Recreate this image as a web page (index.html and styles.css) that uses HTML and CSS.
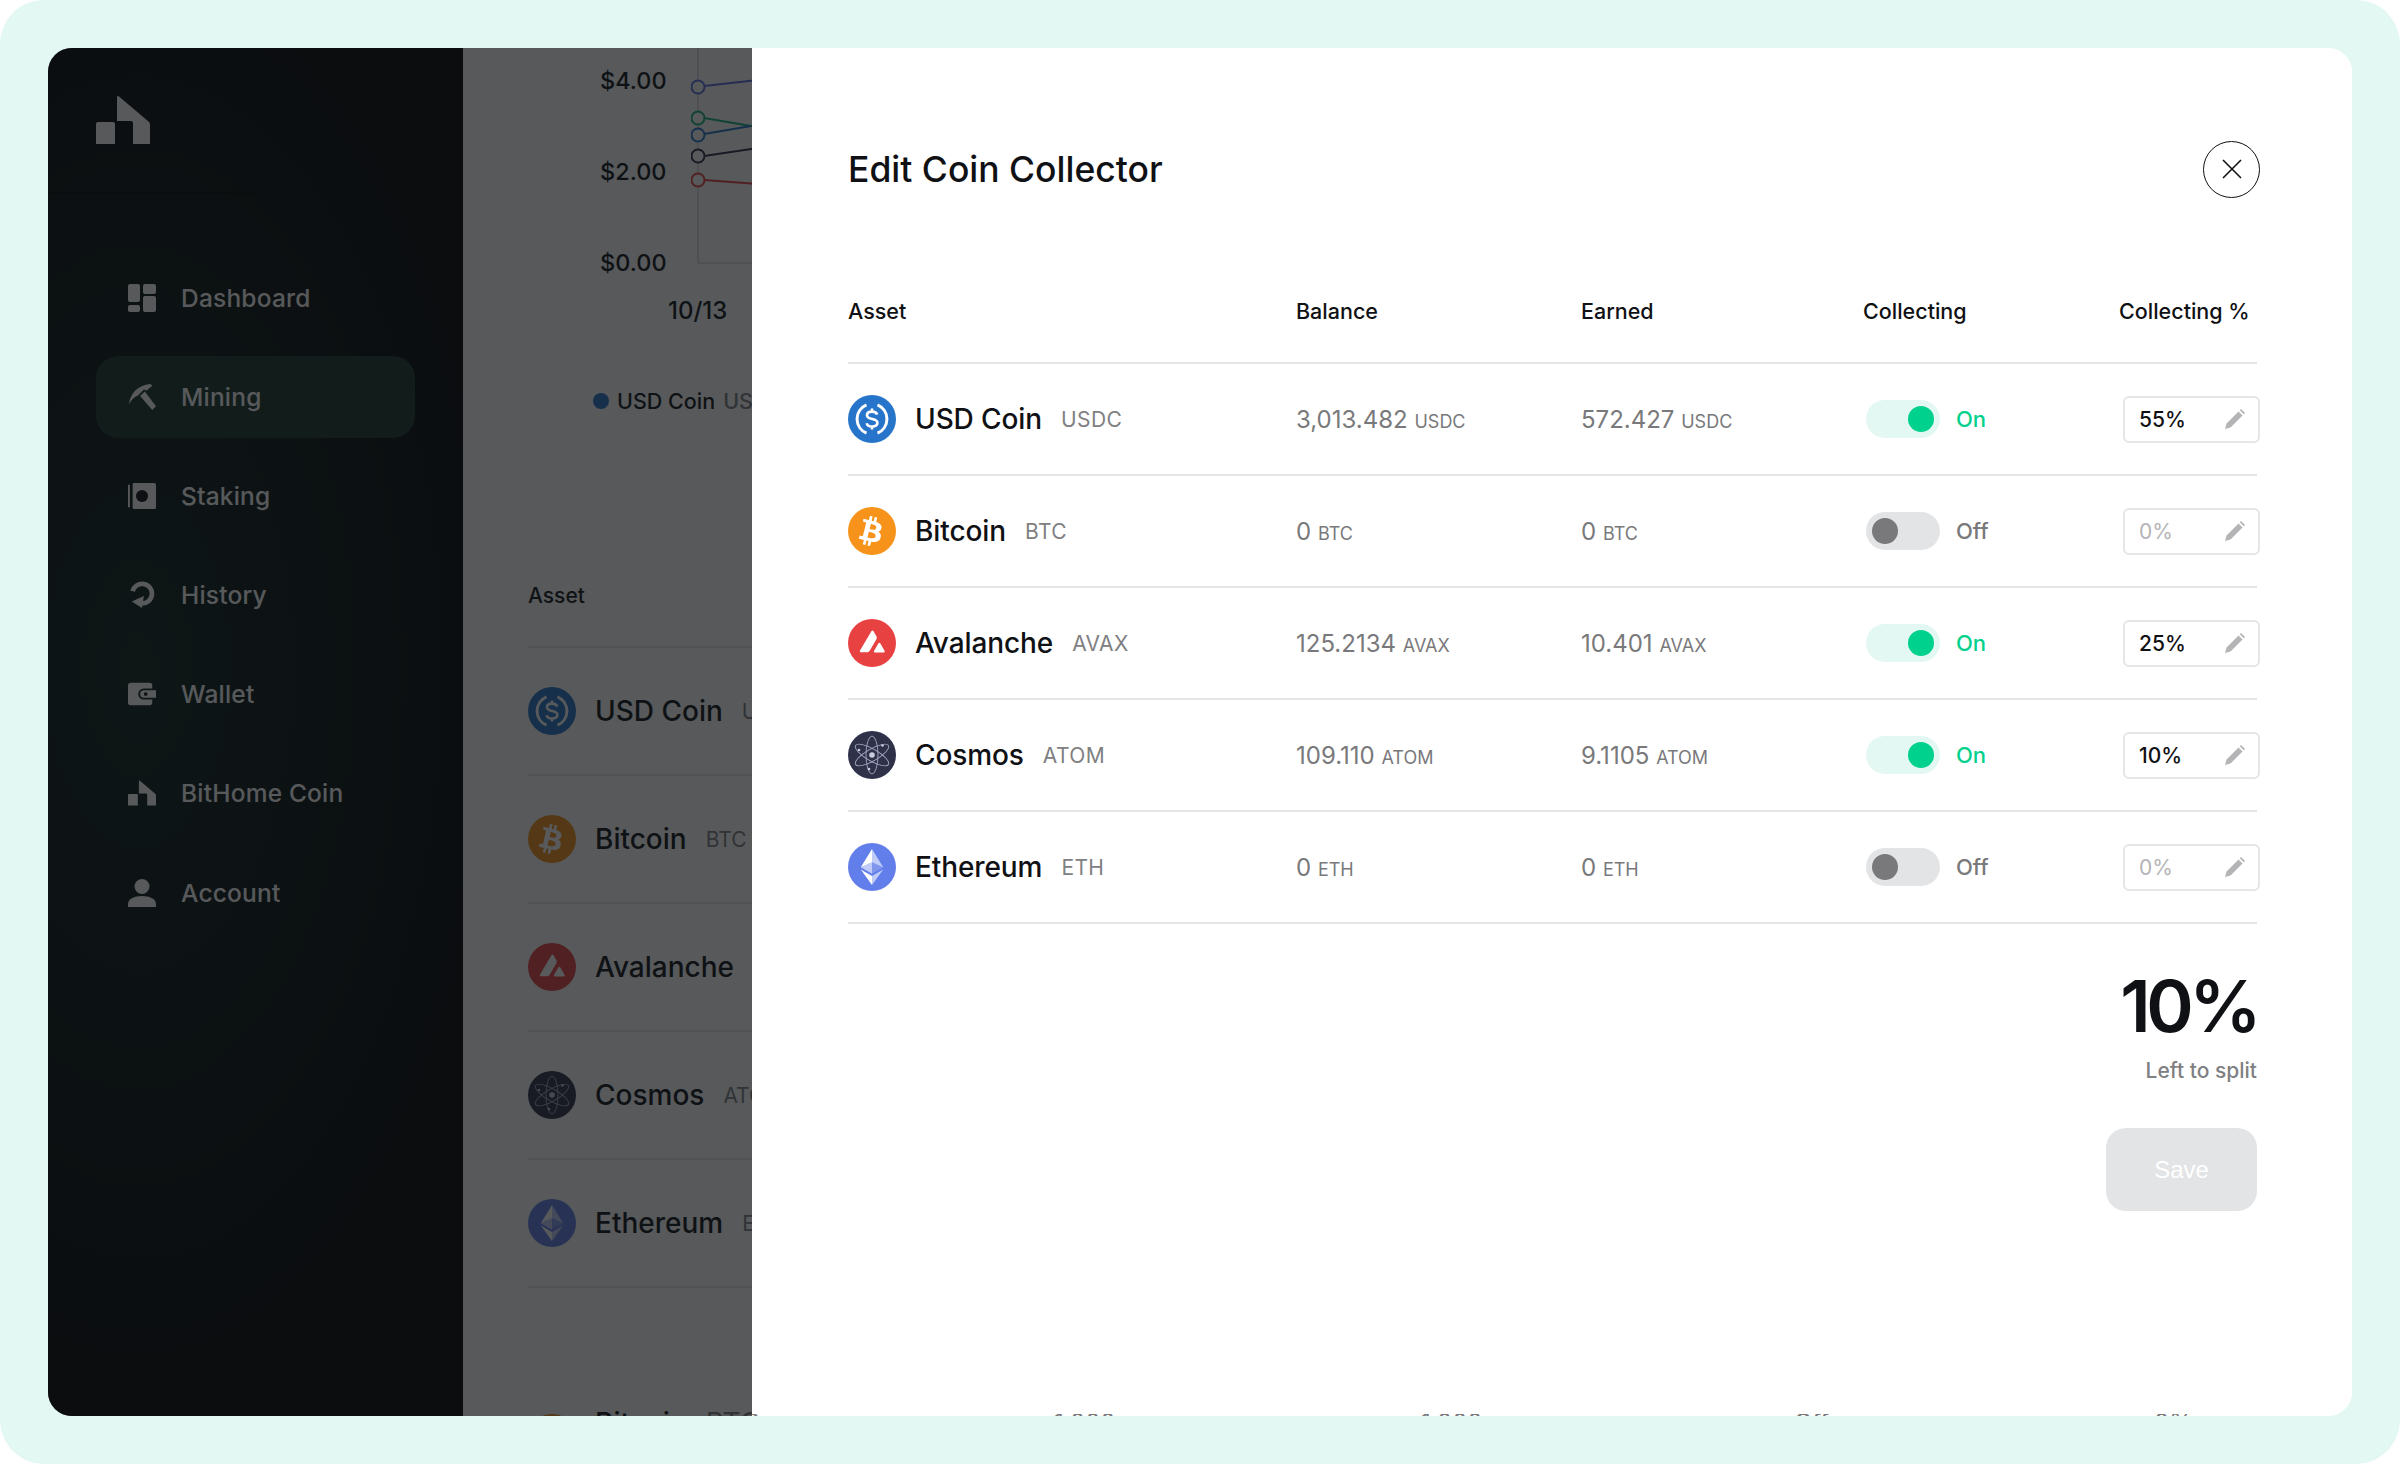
FILE: index.html
```html
<!DOCTYPE html>
<html lang="en">
<head>
  <meta charset="UTF-8">
  <title>Edit Coin Collector</title>
  <link rel="stylesheet" href="styles.css">
</head>
<body>
  <svg class="defs" width="0" height="0">
    <defs>
      <symbol id="coin-usdc" viewBox="0 0 48 48">
        <circle cx="24" cy="24" r="24" fill="#2775ca"/>
        <path d="M18.5 9.8a15.4 15.4 0 0 0 0 28.4M29.5 9.8a15.4 15.4 0 0 1 0 28.4" fill="none" stroke="#fff" stroke-width="3"/>
        <path d="M29.2 19.6c-.6-2-2.6-3-5.2-3-3 0-5 1.400-5 3.700 0 5.100 10.400 2.400 10.400 7.500 0 2.300-2.200 3.700-5.300 3.700-2.800 0-4.900-1.100-5.400-3.300M24 13.500v3.100M24 31.500v3.100" fill="none" stroke="#fff" stroke-width="2.600"/>
      </symbol>
      <symbol id="coin-btc" viewBox="0 0 48 48">
        <circle cx="24" cy="24" r="24" fill="#f7931a"/>
        <path d="M33.500 21c.5-3.200-2-4.900-5.300-6.100l1.100-4.300-2.600-.6-1 4.200-2.100-.5 1-4.200-2.600-.7-1.100 4.300-1.700-.4-3.600-.9-.7 2.800s1.900.4 1.900.5c1.100.3 1.300 1 1.200 1.500l-3 11.900c-.1.300-.5.800-1.200.6 0 0-1.900-.5-1.900-.5l-1.300 3 3.400.8 1.900.5-1.100 4.400 2.600.6 1.100-4.300 2.100.5-1.100 4.300 2.600.7 1.100-4.400c4.500.8 7.800.5 9.300-3.600 1.100-3.200-.1-5.100-2.400-6.300 1.700-.4 3-1.500 3.300-3.800zm-6 8.400c-.8 3.200-6.200 1.500-8 1l1.400-5.700c1.800.5 7.400 1.300 6.600 4.700zm.8-8.500c-.7 2.900-5.200 1.400-6.700 1.100l1.300-5.100c1.500.4 6.200 1 5.400 4z" fill="#fff"/>
      </symbol>
      <symbol id="coin-avax" viewBox="0 0 48 48">
        <circle cx="24" cy="24" r="24" fill="#e84142"/>
        <path d="M23.400 12.300c.6-1 1.500-1 2.100 0l2.900 5c.5 1 .5 1.900 0 2.900l-6.700 11.600c-.5.800-1.300 1.300-2.300 1.400h-6.300c-1.100 0-1.600-.8-1.100-1.800z" fill="#fff"/>
        <path d="M30.300 24.600c.5-1 1.500-1 2.100 0l4.100 7.200c.5 1 0 1.800-1.100 1.800h-8.200c-1.100 0-1.600-.8-1.100-1.800z" fill="#fff"/>
      </symbol>
      <symbol id="coin-atom" viewBox="0 0 48 48">
        <circle cx="24" cy="24" r="24" fill="#2e3148"/>
        <g fill="none" stroke="#a5a8c4" stroke-width=".9">
          <ellipse cx="24" cy="24" rx="6" ry="19"/>
          <ellipse cx="24" cy="24" rx="6" ry="19" transform="rotate(60 24 24)"/>
          <ellipse cx="24" cy="24" rx="6" ry="19" transform="rotate(120 24 24)"/>
        </g>
        <circle cx="24" cy="24" r="2.800" fill="#c9cbe0"/>
        <circle cx="11" cy="19" r="1.300" fill="#c9cbe0"/>
        <circle cx="34.500" cy="14.500" r="1.300" fill="#c9cbe0"/>
        <circle cx="21" cy="38" r="1.300" fill="#c9cbe0"/>
      </symbol>
      <symbol id="coin-eth" viewBox="0 0 48 48">
        <circle cx="24" cy="24" r="24" fill="#627eea"/>
        <path d="M24 6v13.300l11.200 5z" fill="#fff" fill-opacity=".6"/>
        <path d="M24 6L12.800 24.300l11.200-5z" fill="#fff"/>
        <path d="M24 32.900V42l11.200-15.500z" fill="#fff" fill-opacity=".6"/>
        <path d="M24 32.900V42L12.800 26.500z" fill="#fff"/>
        <path d="M24 30.800l11.200-6.500-11.200-5z" fill="#fff" fill-opacity=".2"/>
        <path d="M12.800 24.300l11.200 6.500V19.300z" fill="#fff" fill-opacity=".6"/>
      </symbol>
      <symbol id="pencil" viewBox="0 0 20 20">
        <path d="M0 20l1.500-5.500L13.500 2.500l4 4L5.500 18.500zM14.800 1.200L16 0l4 4-1.200 1.200z" fill="#b4b4b6"/>
      </symbol>
      <symbol id="home-mark" viewBox="0 0 54 48">
        <path d="M0 28a2 2 0 0 1 2-2h15a2 2 0 0 1 2 2v20H0zM21 1.500c0-1.500 1-2 2-1l29.500 25a4 4 0 0 1 1.500 3V48H37V27a2 2 0 0 0-2-2H21z" fill="#fff"/>
      </symbol>
    </defs>
  </svg>

  <div class="page">
    <div class="app">
      <aside class="sidebar">
        <div class="sidebar-top">
          <svg class="logo"><use href="#home-mark"/></svg>
        </div>
        <nav class="nav">
          <a class="nav-item">
            <svg class="nav-icon" viewBox="0 0 28 28"><path d="M0 2a2 2 0 0 1 2-2h8a2 2 0 0 1 2 2v14a2 2 0 0 1-2 2H2a2 2 0 0 1-2-2zM15 2a2 2 0 0 1 2-2h9a2 2 0 0 1 2 2v6a2 2 0 0 1-2 2h-9a2 2 0 0 1-2-2zM15 14a2 2 0 0 1 2-2h9a2 2 0 0 1 2 2v12a2 2 0 0 1-2 2h-9a2 2 0 0 1-2-2zM0 23a2 2 0 0 1 2-2h8a2 2 0 0 1 2 2v3a2 2 0 0 1-2 2H2a2 2 0 0 1-2-2z" fill="#fff"/></svg>
            Dashboard
          </a>
          <a class="nav-item active">
            <svg class="nav-icon" viewBox="0 0 30 30"><path d="M1 23C2 12 10 2 24 1l2 2-6 5-3-1-5 5-1 1c-4 2-8 5-10 10z" fill="#fff"/><path d="M13 14l5-5 12 16-4 4z" fill="#fff"/></svg>
            Mining
          </a>
          <a class="nav-item">
            <svg class="nav-icon" viewBox="0 0 30 28"><path d="M0 2h2v24H0zM5 1.500A1.500 1.500 0 0 1 6.500 0H28a2 2 0 0 1 2 2v24a2 2 0 0 1-2 2H6.500A1.500 1.500 0 0 1 5 26.500z" fill="#fff"/><circle cx="15" cy="14" r="6.500" fill="#0b0d0e"/></svg>
            Staking
          </a>
          <a class="nav-item">
            <svg class="nav-icon" viewBox="0 0 28 30"><path d="M4 11A10.500 10.500 0 1 1 14 24" fill="none" stroke="#fff" stroke-width="5"/><path d="M16 16l-2 13-11-7z" fill="#fff"/></svg>
            History
          </a>
          <a class="nav-item">
            <svg class="nav-icon" viewBox="0 0 30 24"><path d="M0 3a3 3 0 0 1 3-3h20a3 3 0 0 1 3 3v3h-9a6 6 0 0 0 0 12h9v3a3 3 0 0 1-3 3H3a3 3 0 0 1-3-3z" fill="#fff"/><path d="M17 8h13v8H17a4 4 0 0 1 0-8z" fill="#fff"/><circle cx="19" cy="12" r="2" fill="#0b0d0e"/></svg>
            Wallet
          </a>
          <a class="nav-item">
            <svg class="nav-icon"><use href="#home-mark"/></svg>
            BitHome Coin
          </a>
          <a class="nav-item">
            <svg class="nav-icon" viewBox="0 0 28 28"><circle cx="14" cy="7.500" r="7.500" fill="#fff"/><path d="M0 28v-3c0-5 6-8 14-8s14 3 14 8v3z" fill="#fff"/></svg>
            Account
          </a>
        </nav>
      </aside>

      <main class="main">
        <div class="chart">
          <div class="chart-labels">
            <span>$4.00</span>
            <span>$2.00</span>
            <span>$0.00</span>
          </div>
          <svg class="chart-plot" viewBox="0 0 67 232" width="67" height="232">
            <path d="M7 0V215H67" fill="none" stroke="#d9d9db" stroke-width="1.500"/>
            <path d="M13 38L67 32" stroke="#5b6ee1" stroke-width="2"/>
            <path d="M13 70L60 78" stroke="#16b37a" stroke-width="2"/>
            <path d="M13 86L60 78" stroke="#2775ca" stroke-width="2"/>
            <path d="M60 78H67" stroke="#16b37a" stroke-width="2"/>
            <path d="M13 108L67 100" stroke="#2e3148" stroke-width="2"/>
            <path d="M13 132L67 136" stroke="#e84142" stroke-width="2"/>
            <g fill="#fff" stroke-width="2">
              <circle cx="7" cy="39" r="6.500" stroke="#5b6ee1"/>
              <circle cx="7" cy="70" r="6.500" stroke="#16b37a"/>
              <circle cx="7" cy="87" r="6.500" stroke="#2775ca"/>
              <circle cx="7" cy="108" r="6.500" stroke="#2e3148"/>
              <circle cx="7" cy="132" r="6.500" stroke="#e84142"/>
            </g>
          </svg>
        </div>
        <div class="chart-date">10/13</div>
        <div class="legend"><i class="legend-dot"></i>USD Coin <span class="muted">USDC</span></div>

        <div class="bg-head">Asset</div>
        <div class="bg-row"><svg class="coin"><use href="#coin-usdc"/></svg><b>USD Coin</b><span class="muted">USDC</span></div>
        <div class="bg-row"><svg class="coin"><use href="#coin-btc"/></svg><b>Bitcoin</b><span class="muted">BTC</span></div>
        <div class="bg-row"><svg class="coin"><use href="#coin-avax"/></svg><b>Avalanche</b><span class="muted">AVAX</span></div>
        <div class="bg-row"><svg class="coin"><use href="#coin-atom"/></svg><b>Cosmos</b><span class="muted">ATOM</span></div>
        <div class="bg-row"><svg class="coin"><use href="#coin-eth"/></svg><b>Ethereum</b><span class="muted">ETH</span></div>

        <!-- next table under the modal, only its top edge shows -->
        <div class="bg-peek">
          <div class="bg-peek-asset"><svg class="coin"><use href="#coin-btc"/></svg><b>Bitcoin</b><span class="muted">BTC</span></div>
          <span>1,000</span>
          <span>1,000</span>
          <span>Off</span>
          <span>0%</span>
        </div>
      </main>

      <div class="scrim"></div>

      <section class="modal">
        <header class="modal-head">
          <h1>Edit Coin Collector</h1>
          <button class="close">
            <svg viewBox="0 0 20 20" width="20" height="20"><path d="M1 1l18 18M19 1L1 19" stroke="#101114" stroke-width="1.600" fill="none"/></svg>
          </button>
        </header>

        <div class="row row-head">
          <div>Asset</div>
          <div>Balance</div>
          <div>Earned</div>
          <div>Collecting</div>
          <div class="head-pct">Collecting %</div>
        </div>

        <div class="row">
          <div class="asset"><svg class="coin"><use href="#coin-usdc"/></svg><span class="name">USD Coin</span><span class="ticker">USDC</span></div>
          <div class="amount">3,013.482 <small>USDC</small></div>
          <div class="amount">572.427 <small>USDC</small></div>
          <div class="state"><span class="toggle on"><i></i></span><span class="state-on">On</span></div>
          <div class="pct"><span>55%</span><svg class="pencil"><use href="#pencil"/></svg></div>
        </div>

        <div class="row">
          <div class="asset"><svg class="coin"><use href="#coin-btc"/></svg><span class="name">Bitcoin</span><span class="ticker">BTC</span></div>
          <div class="amount">0 <small>BTC</small></div>
          <div class="amount">0 <small>BTC</small></div>
          <div class="state"><span class="toggle"><i></i></span><span class="state-off">Off</span></div>
          <div class="pct empty"><span>0%</span><svg class="pencil"><use href="#pencil"/></svg></div>
        </div>

        <div class="row">
          <div class="asset"><svg class="coin"><use href="#coin-avax"/></svg><span class="name">Avalanche</span><span class="ticker">AVAX</span></div>
          <div class="amount">125.2134 <small>AVAX</small></div>
          <div class="amount">10.401 <small>AVAX</small></div>
          <div class="state"><span class="toggle on"><i></i></span><span class="state-on">On</span></div>
          <div class="pct"><span>25%</span><svg class="pencil"><use href="#pencil"/></svg></div>
        </div>

        <div class="row">
          <div class="asset"><svg class="coin"><use href="#coin-atom"/></svg><span class="name">Cosmos</span><span class="ticker">ATOM</span></div>
          <div class="amount">109.110 <small>ATOM</small></div>
          <div class="amount">9.1105 <small>ATOM</small></div>
          <div class="state"><span class="toggle on"><i></i></span><span class="state-on">On</span></div>
          <div class="pct"><span>10%</span><svg class="pencil"><use href="#pencil"/></svg></div>
        </div>

        <div class="row">
          <div class="asset"><svg class="coin"><use href="#coin-eth"/></svg><span class="name">Ethereum</span><span class="ticker">ETH</span></div>
          <div class="amount">0 <small>ETH</small></div>
          <div class="amount">0 <small>ETH</small></div>
          <div class="state"><span class="toggle"><i></i></span><span class="state-off">Off</span></div>
          <div class="pct empty"><span>0%</span><svg class="pencil"><use href="#pencil"/></svg></div>
        </div>

        <div class="summary">
          <div class="summary-value">10%</div>
          <div class="summary-label">Left to split</div>
          <button class="save">Save</button>
        </div>
      </section>
    </div>
  </div>
</body>
</html>
```
FILE: styles.css
```css
* {
  box-sizing: border-box;
}

body {
  margin: 0;
  background-color: #fff;
  font-family: Inter, "Liberation Sans", sans-serif;
  color: #101114;
}

.defs {
  position: absolute;
}

.page {
  width: 2400px;
  height: 1464px;
  padding: 48px;
  background-color: #e3f8f3;
  border-radius: 44px;
}

.app {
  position: relative;
  display: flex;
  height: 1368px;
  border-radius: 24px;
  overflow: hidden;
  background-color: #fff;
}

/* sidebar sits under the scrim, so its colours are the undimmed ones */
.sidebar {
  width: 415px;
  background-color: #020203;
  background-image: radial-gradient(ellipse 360px 700px at 90px 620px, #0a1f1a 0%, rgba(10, 31, 26, 0) 100%);
  color: #fff;
}

.sidebar-top {
  height: 146px;
  padding: 48px 48px 0;
  border-bottom: 3px solid #000;
}

.logo {
  display: block;
  width: 54px;
  height: 48px;
}

.nav {
  display: flex;
  flex-direction: column;
  gap: 17.2px;
  padding: 62.5px 48px 0;
}

.nav-item {
  display: flex;
  align-items: center;
  gap: 25px;
  height: 82px;
  padding-left: 32px;
  border-radius: 22px;
  font-size: 24.5px;
  font-weight: 500;
  letter-spacing: 0.2px;
}

.nav-item.active {
  background-color: #17332b;
}

.nav-icon {
  width: 28px;
  height: 28px;
  flex: none;
}

.main {
  flex: 1;
  padding-left: 65px;
  overflow: hidden;
  background-color: #fff;
}

.chart {
  display: flex;
  height: 232px;
}

.chart-labels {
  display: flex;
  flex-direction: column;
  gap: 62px;
  width: 163px;
  padding: 18px 0 0 72px;
  font-size: 23.5px;
  font-weight: 500;
}

.chart-labels span {
  height: 29px;
}

.chart-plot {
  flex: none;
}

.chart-date {
  margin: 16px 0 0 140px;
  font-size: 24px;
  font-weight: 500;
}

.legend {
  display: flex;
  align-items: center;
  gap: 8px;
  margin: 63px 0 0 65px;
  font-size: 21.5px;
  font-weight: 500;
  white-space: nowrap;
}

.legend-dot {
  width: 16px;
  height: 16px;
  border-radius: 50%;
  background-color: #2775ca;
}

.muted {
  color: #808082;
}

.bg-head {
  margin-top: 169px;
  padding-bottom: 38px;
  width: 900px;
  border-bottom: 2px solid #e6e6e8;
  font-size: 21px;
  font-weight: 500;
}

.bg-row {
  display: flex;
  align-items: center;
  gap: 19px;
  width: 900px;
  height: 128px;
  border-bottom: 2px solid #e6e6e8;
  font-size: 28px;
  white-space: nowrap;
}

.bg-row b,
.bg-peek b {
  font-weight: 500;
  letter-spacing: 0;
}

.bg-row .muted {
  font-size: 21px;
}

.bg-peek {
  display: grid;
  grid-template-columns: 526px 367px 373px 360px 100px;
  margin-top: 126px;
  font-size: 24px;
  line-height: 18px;
  color: #79797b;
  white-space: nowrap;
}

.bg-peek-asset {
  display: flex;
  gap: 19px;
  font-size: 28px;
  color: #101114;
}

.coin {
  width: 48px;
  height: 48px;
  flex: none;
}

.scrim {
  position: absolute;
  top: 0;
  bottom: 0;
  left: 0;
  width: 704px;
  background-color: rgba(16, 18, 21, 0.7);
}

.modal {
  position: absolute;
  top: 0;
  right: 0;
  bottom: 2px;
  width: 1600px;
  padding: 0 95px 0 96px;
  background-color: #fff;
  border-radius: 0 24px 24px 0;
}

.modal-head {
  display: flex;
  justify-content: space-between;
  align-items: center;
  height: 242px;
}

.modal-head h1 {
  margin: 0;
  font-size: 35.5px;
  font-weight: 500;
}

.close {
  display: flex;
  align-items: center;
  justify-content: center;
  width: 57px;
  height: 57px;
  margin-right: -3px;
  padding: 0;
  border: 1.5px solid #101114;
  border-radius: 50%;
  background: none;
}

.row {
  display: grid;
  grid-template-columns: 448px 285px 282px 256px 1fr;
  align-items: center;
  height: 112px;
  border-bottom: 2px solid #e6e6e8;
}

.row-head {
  height: 74px;
  padding-bottom: 31px;
  font-size: 21.5px;
  font-weight: 500;
}

.head-pct {
  white-space: nowrap;
}

.asset {
  display: flex;
  align-items: center;
}

.name {
  margin: 0 19px;
  font-size: 28px;
  font-weight: 500;
  letter-spacing: -0.1px;
}

.ticker {
  font-size: 21px;
  color: #808082;
  letter-spacing: 0.4px;
}

.amount {
  font-size: 24px;
  color: #79797b;
  white-space: nowrap;
}

.amount small {
  font-size: 18px;
}

.state {
  display: flex;
  align-items: center;
  gap: 16px;
  font-size: 22px;
  font-weight: 500;
}

.toggle {
  display: flex;
  align-items: center;
  width: 74px;
  height: 38px;
  margin-left: 3px;
  padding: 0 6px;
  border-radius: 19px;
  background-color: #e3e4e6;
}

.toggle i {
  width: 26px;
  height: 26px;
  border-radius: 50%;
  background-color: #79797b;
}

.toggle.on {
  justify-content: flex-end;
  background-color: #e3f8f3;
}

.toggle.on i {
  background-color: #00d18d;
}

.state-on {
  color: #00d18d;
}

.state-off {
  color: #79797b;
}

.pct {
  display: flex;
  align-items: center;
  justify-content: space-between;
  width: 137px;
  height: 47px;
  margin-left: 4px;
  padding: 0 13px 0 14px;
  border: 2px solid #e6e6e8;
  border-radius: 6px;
  font-size: 21px;
  font-weight: 500;
}

.pct.empty {
  color: #b4b4b6;
  font-weight: 400;
}

.pencil {
  width: 20px;
  height: 20px;
}

.summary {
  display: flex;
  flex-direction: column;
  align-items: flex-end;
}

.summary-value {
  margin-top: 37px;
  font-size: 72px;
  font-weight: 600;
  line-height: 90px;
  letter-spacing: -4.5px;
}

.summary-label {
  margin-top: 7px;
  font-size: 21px;
  font-weight: 500;
  color: #808082;
}

.save {
  width: 151px;
  height: 83px;
  margin-top: 45px;
  border: none;
  border-radius: 20px;
  background-color: #e3e4e6;
  color: #fff;
  font-family: "Liberation Sans", sans-serif;
  font-size: 24px;
}
```
